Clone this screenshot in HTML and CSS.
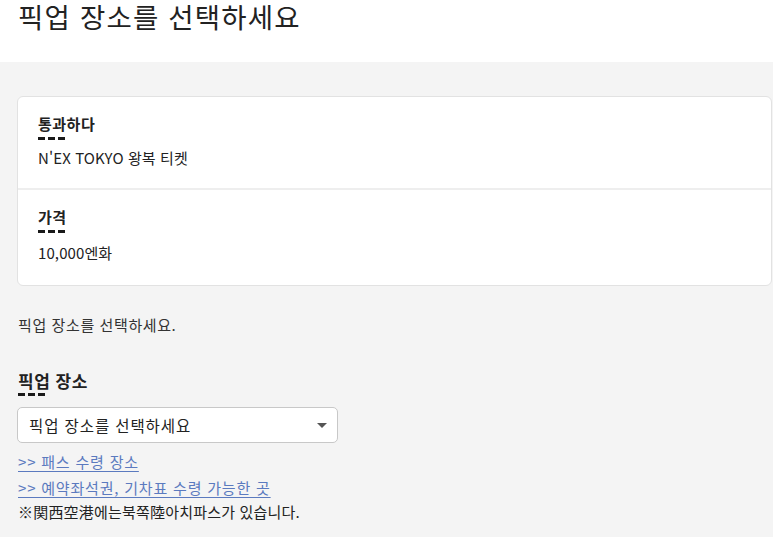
FILE: index.html
```html
<!DOCTYPE html>
<html lang="ko">
<head>
<meta charset="utf-8">
<link rel="stylesheet" href="styles.css">
</head>
<body>
<header class="header">
  <h1 class="page-title">픽업 장소를 선택하세요</h1>
</header>
<main class="main">
  <section class="card">
    <div class="card-row">
      <h2 class="label">통과하다</h2>
      <span class="dashes"></span>
      <p class="value">N'EX TOKYO 왕복 티켓</p>
    </div>
    <div class="card-row card-row-last">
      <h2 class="label">가격</h2>
      <span class="dashes"></span>
      <p class="value value-last">10,000엔화</p>
    </div>
  </section>
  <p class="intro">픽업 장소를 선택하세요.</p>
  <div class="field">
    <h2 class="field-label">픽업 장소</h2>
    <span class="dashes"></span>
    <div class="select">
      <span class="select-text">픽업 장소를 선택하세요</span>
      <span class="select-arrow"></span>
    </div>
    <a class="link" href="#">&gt;&gt; 패스 수령 장소</a>
    <a class="link" href="#">&gt;&gt; 예약좌석권, 기차표 수령 가능한 곳</a>
    <p class="note">※関西空港에는북쪽陸아치파스가 있습니다.</p>
  </div>
</main>
</body>
</html>
```
FILE: styles.css
```css
* { box-sizing: border-box; }
html, body {
  margin: 0;
  padding: 0;
  background: #f4f4f4;
  color: #222;
  font-family: "Noto Sans CJK KR", "Noto Sans", sans-serif;
}
.header {
  background: #fff;
  height: 62px;
  padding: 1px 18px 0;
}
.page-title {
  margin: 0;
  font-size: 27.5px;
  font-weight: 400;
  line-height: 30px;
  color: #222;
  letter-spacing: 1.2px;
}
.main {
  padding: 34px 1px 0 17px;
}
.card {
  background: #fff;
  border: 1px solid #e2e2e2;
  border-radius: 6px;
}
.card-row {
  padding: 16px 20px 19px;
  border-bottom: 2px solid #eeeeee;
  display: flex;
  flex-direction: column;
  align-items: flex-start;
}
.card-row-last {
  border-bottom: 0;
  padding: 16px 20px 21px;
}
.label {
  margin: 0;
  font-size: 15px;
  font-weight: 700;
  line-height: 22px;
  letter-spacing: 0.5px;
}
.dashes {
  display: block;
  width: 27px;
  height: 3px;
  margin-top: 2px;
  background: repeating-linear-gradient(to right, #1a1a1a 0 7px, transparent 7px 10px);
}
.value {
  margin: 7px 0 0;
  font-size: 15px;
  line-height: 22px;
  letter-spacing: 0.1px;
}
.value-last { margin-top: 9px; }
.intro {
  margin: 28px 0 0 1px;
  font-size: 15px;
  line-height: 22px;
  letter-spacing: 0.6px;
  color: #333;
}
.field {
  margin-top: 34px;
  display: flex;
  flex-direction: column;
  align-items: flex-start;
}
.field-label {
  margin: 0 0 0 1px;
  font-size: 17px;
  font-weight: 700;
  line-height: 22px;
  letter-spacing: 0.5px;
}
.field .dashes { margin-left: 1px; margin-top: 1px; }
.select {
  margin-top: 11px;
  width: 321px;
  height: 36px;
  background: #fff;
  border: 1px solid #c8c8c8;
  border-radius: 5px;
  display: flex;
  align-items: center;
  justify-content: space-between;
  padding: 0 10px 0 11px;
}
.select-text {
  font-size: 15.5px;
  letter-spacing: 0.9px;
  color: #222;
}
.select-arrow {
  width: 0;
  height: 0;
  border-left: 5px solid transparent;
  border-right: 5px solid transparent;
  border-top: 5px solid #555;
}
.link {
  margin-top: 9px;
  font-size: 15px;
  line-height: 20px;
  letter-spacing: 0.8px;
  color: #5b7abf;
  text-decoration: underline;
  text-underline-offset: 3px;
  margin-left: 1px;
}
.link + .link { margin-top: 6px; }
.note {
  margin: 3px 0 0 1px;
  font-size: 15px;
  line-height: 22px;
  letter-spacing: 0.2px;
  color: #222;
}
```
